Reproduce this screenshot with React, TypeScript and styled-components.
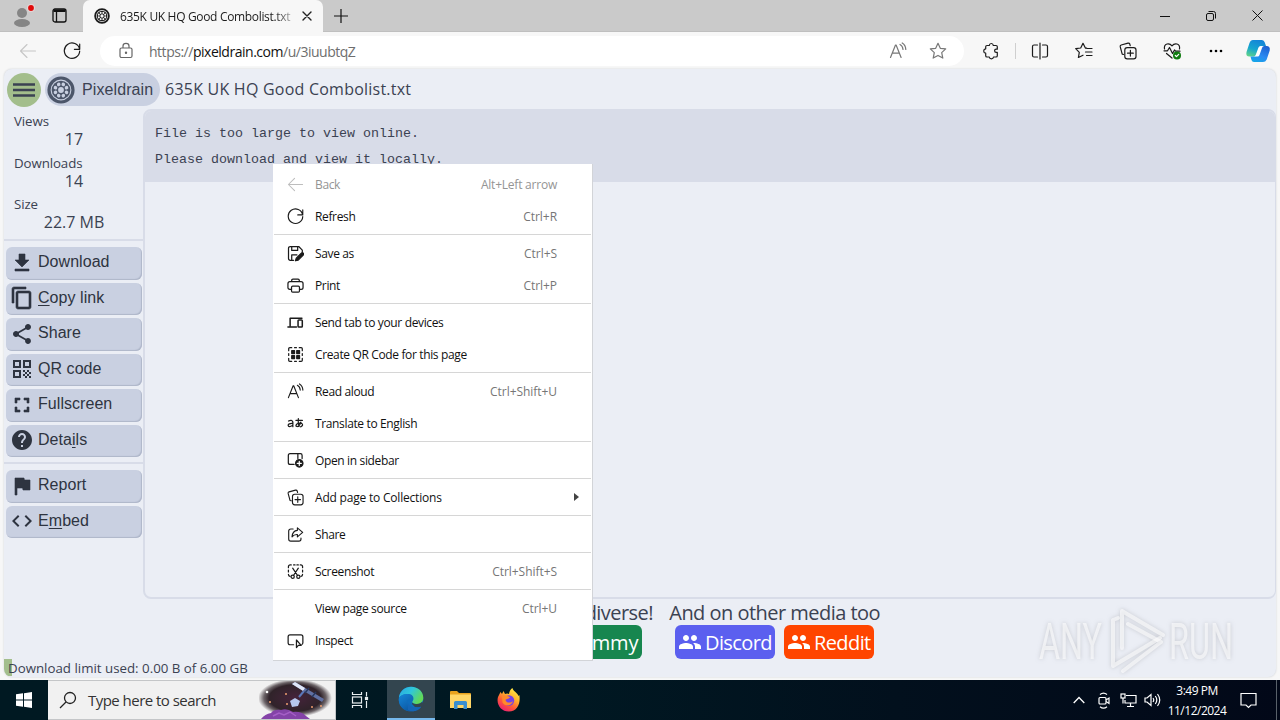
import React from 'react';
import styled, { createGlobalStyle } from 'styled-components';
import {
  MdFileDownload, MdContentCopy, MdShare, MdQrCode, MdFullscreen, MdHelp, MdFlag, MdCode, MdPeople,
} from 'react-icons/md';

const Global = createGlobalStyle`
  html, body { margin: 0; padding: 0; }
  body { width: 1280px; height: 720px; overflow: hidden; font-family: 'Open Sans', 'Noto Sans', sans-serif; }
  * { box-sizing: border-box; }
  svg { display: block; flex: none; }
`;

const Screen = styled.div`
  position: relative;
  width: 1280px;
  height: 720px;
  overflow: hidden;
  display: flex;
  flex-direction: column;
  background: #f7f7f7;
`;

const Label = styled.span<{ $size: number; $ls?: number; $color?: string; $arial?: boolean }>`
  font-size: ${p => p.$size}px;
  letter-spacing: ${p => p.$ls ?? 0}px;
  color: ${p => p.$color ?? 'inherit'};
  ${p => p.$arial && "font-family: 'Liberation Sans', Arial, sans-serif;"}
  white-space: pre;
`;

/* ---------- browser chrome ---------- */
const TabStrip = styled.header`
  height: 32px;
  flex: none;
  display: flex;
  background: #cacaca;
  border-bottom: 1px solid #bfbfbf;
`;
const StripButtons = styled.div`
  width: 83px;
  display: flex;
  align-items: center;
  padding: 0 0 0 10px;
  gap: 16px;
`;
const Tab = styled.div`
  width: 240px;
  height: 32px;
  display: flex;
  align-items: center;
  padding-left: 11px;
  background: #f7f7f7;
  border-radius: 7px 7px 0 0;
`;
const TabTitle = styled.div`
  width: 178px;
  margin-left: 10px;
  display: flex;
  overflow: hidden;
  mask-image: linear-gradient(90deg, #000 154px, transparent 180px);
`;
const WindowControls = styled.div`
  margin-left: auto;
  display: flex;
  align-items: center;
`;
const ControlCell = styled.div`
  width: 46px;
  display: flex;
  justify-content: center;
`;
const Toolbar = styled.div`
  height: 37px;
  flex: none;
  display: flex;
  align-items: center;
  padding-left: 18px;
`;
const AddressBar = styled.div`
  width: 864px;
  height: 30px;
  flex: none;
  margin-left: -6px;
  display: flex;
  align-items: center;
  padding: 0 10px 0 18px;
  border-radius: 15px;
  background: #fff;
`;
const Url = styled.div`
  flex: 1;
  margin-left: 15px;
  color: #6e6e6e;
  b { font-weight: 400; color: #111; }
`;
const ToolbarIcons = styled.div`
  flex: 1;
  display: flex;
  align-items: center;
  padding-left: 17px;
`;
const IconCell = styled.div<{ $w: number }>`
  width: ${p => p.$w}px;
  flex: none;
  display: flex;
  justify-content: center;
`;
const ToolDivider = styled.div`
  width: 1px;
  height: 16px;
  background: #cfcfcf;
`;

/* ---------- page ---------- */
const Page = styled.main`
  height: 608px;
  flex: none;
  margin: 0 4px 3px 4px;
  display: flex;
  flex-direction: column;
  border-radius: 8px;
  background: #ebeef5;
  color: #3b4252;
  box-shadow: 0 0 2px #c9ccd0;
  overflow: hidden;
`;
const PageHeader = styled.div`
  height: 40px;
  flex: none;
  display: flex;
  align-items: center;
  padding: 1px 0 0 3px;
`;
const MenuToggle = styled.div`
  width: 34px;
  height: 34px;
  border-radius: 50%;
  display: grid;
  place-items: center;
  background: #a3be8c;
`;
const BrandPill = styled.div`
  width: 115px;
  height: 33px;
  margin: 0 5px 0 4px;
  border-radius: 17px;
  display: flex;
  align-items: center;
  gap: 7px;
  padding-left: 2px;
  background: #c9d0e1;
`;
const FileName = styled.div`
  padding-bottom: 2px;
`;
const Body = styled.div`
  height: 490px;
  flex: none;
  display: flex;
`;
const Sidebar = styled.aside`
  width: 139px;
  display: flex;
  flex-direction: column;
`;
const Stats = styled.dl`
  margin: 0;
  height: 130px;
  padding-top: 1px;
`;
const StatName = styled.dt`
  height: 20px;
  line-height: 20px;
  padding-left: 10px;
`;
const StatValue = styled.dd`
  height: 21.7px;
  line-height: 19px;
  margin: 0;
  text-align: center;
  padding-left: 1px;
`;
const Rule = styled.div`
  height: 2px;
  flex: none;
  background: #d8dce8;
`;
const ButtonGroup = styled.div<{ $top: number; $bottom: number }>`
  display: flex;
  flex-direction: column;
  gap: 3px;
  padding: ${p => p.$top}px 1px ${p => p.$bottom}px 2px;
`;
const SideButton = styled.div`
  height: 32.5px;
  display: flex;
  align-items: center;
  gap: 4px;
  padding-left: 4px;
  border-radius: 6px;
  background: #c9d0e1;
  color: #2e3440;
  box-shadow: inset -1px -1px 1px #aeb6c9;
  u { text-decoration-thickness: 1px; text-underline-offset: 2px; }
  span { padding-bottom: 2px; }
  svg { margin-bottom: 1px; }
  path[fill='none'] { stroke: none; }
`;
const Viewer = styled.section`
  flex: 1;
  border: 2px solid #d8dce8;
  border-right-width: 1px;
  border-radius: 8px;
  overflow: hidden;
`;
const Notice = styled.pre`
  margin: 0;
  height: 71px;
  padding: 10px 10px 0;
  background: #d8dce8;
  font: 13.33px/26px 'Liberation Mono', monospace;
  color: #3b4252;
`;
const Footer = styled.footer`
  flex: 1;
  display: flex;
  gap: 16px;
  padding-left: 548px;
`;
const SocialBlock = styled.div<{ $w: number }>`
  width: ${p => p.$w}px;
  display: flex;
  flex-direction: column;
  align-items: center;
`;
const SocialTitle = styled.div`
  width: 100%;
  height: 26px;
  line-height: 27px;
  text-align: right;
`;
const SocialRow = styled.div`
  display: flex;
  gap: 9px;
`;
const SocialButton = styled.div<{ $bg: string; $w: number; $pad?: number }>`
  width: ${p => p.$w}px;
  height: 34px;
  display: flex;
  align-items: center;
  gap: 3px;
  padding-left: ${p => p.$pad ?? 3}px;
  border-radius: 6px;
  background: ${p => p.$bg};
  color: #fff;
`;
const Limit = styled.div`
  height: 21px;
  flex: none;
  line-height: 17px;
  padding-left: 4px;
  background: linear-gradient(90deg, #a3be8c 8px, transparent 8px);
  background-size: 100% 17px;
  background-repeat: no-repeat;
  border-radius: 0 0 0 8px;
`;

/* ---------- context menu ---------- */
const Menu = styled.div`
  position: absolute;
  left: 273px;
  top: 164px;
  width: 320px;
  height: 497px;
  padding: 4px 0;
  background: #fff;
  border: 1px solid #d2d4d8;
  border-width: 0 1px 1px 0;
`;
const MenuRow = styled.div`
  height: 32px;
  display: flex;
  align-items: center;
  padding: 0 12px 0 13.5px;
`;
const MenuIcon = styled.div`
  width: 28.5px;
  svg { width: 17px; height: 17px; }
`;
const MenuText = styled.div`
  flex: 1;
  padding-bottom: 2px;
`;
const Arrow = styled.div`
  width: 23px;
  display: flex;
  justify-content: flex-end;
`;
const MenuRule = styled.div`
  height: 5px;
  padding: 2px 1px;
  &::after { content: ''; display: block; height: 1px; background: #d6d6d6; }
`;

/* ---------- taskbar ---------- */
const Taskbar = styled.footer`
  height: 40px;
  flex: none;
  display: flex;
  background: linear-gradient(90deg, #001922 0%, #001822 45%, #02101d 70%, #020818 100%);
`;
const TaskCell = styled.div<{ $w: number; $active?: boolean }>`
  width: ${p => p.$w}px;
  display: grid;
  place-items: center;
  ${p => p.$active && 'background: #33454f; border-bottom: 2px solid #76b9ed;'}
`;
const SearchBox = styled.div`
  width: 288px;
  display: flex;
  align-items: center;
  padding-left: 11px;
  background: #f1f1f1;
  border: 1px solid #c4c6c8;
  border-width: 1px 1px 1px 0;
  overflow: hidden;
`;
const SearchText = styled.div`
  width: 171px;
  margin-left: 11px;
`;
const Tray = styled.div`
  margin-left: auto;
  display: flex;
  align-items: center;
`;
const Clock = styled.div`
  width: 66px;
  line-height: 18px;
  text-align: center;
  color: #fff;
`;
const DesktopEdge = styled.div`
  width: 4px;
  height: 40px;
  margin-left: 9px;
  border-left: 1px solid #59616a;
`;
const Watermark = styled.svg`
  position: absolute;
  left: 1030px;
  top: 600px;
  filter: drop-shadow(0 0 2px rgba(120, 122, 130, 0.5));
`;

/* ---------- icons ---------- */
type IconProps = { w?: number; c?: string; sw?: number; children: React.ReactNode };
const Line = ({ w = 18, c = '#1b1b1b', sw = 1.2, children }: IconProps) => (
  <svg width={w} height={w} viewBox="0 0 18 18" fill="none" stroke={c} strokeWidth={sw} strokeLinecap="round" strokeLinejoin="round">
    {children}
  </svg>
);
const BackArrow = ({ c, w }: { c: string; w?: number }) => <Line c={c} w={w} sw={1.1}><path d="M16.5 9H1.8M8 2.5L1.5 9 8 15.5" /></Line>;
const Refresh = () => <Line><path d="M16.6 7.4A7.7 7.7 0 1 0 16.7 9M16.7 2v5.3h-5.3" /></Line>;
const ReadAloud = ({ c }: { c?: string }) => (
  <Line c={c}><path d="M1.5 15.5L6.5 3h.6l5 12.5M3.2 11.2h7.2M11 2.5q2.8 1.4 3 5M13.2 1q3.4 2 3.6 6.5" /></Line>
);
const Collections = () => (
  <Line>
    <path d="M4.5 12.5l-1.3-.4-2-7.4Q1 3.4 2.2 3L9 1.2q1.3-.3 1.8.9l.4 1.6" />
    <rect x="5.8" y="5.6" width="11.2" height="11.2" rx="2.4" /><path d="M11.4 8.3v5.8M8.5 11.2h5.8" />
  </Line>
);
const Wheel = ({ w, c, light }: { w: number; c: string; light: string }) => (
  <svg width={w} height={w} viewBox="0 0 28 28" fill="none">
    <circle cx="14" cy="14" r="12" stroke={c} strokeWidth="3.2" />
    <circle cx="14" cy="14" r="9.3" fill={c} />
    {[0, 45, 90, 135, 180, 225, 270, 315].map(a => (
      <circle key={a} cx="14" cy="8" r="1.8" fill={light} transform={`rotate(${a + 22.5} 14 14)`} />
    ))}
    <circle cx="14" cy="14" r="2.9" fill={light} />
  </svg>
);
const SaveAs = () => (
  <Line sw={1.3}>
    <path d="M7 16.2H3.4a1.8 1.8 0 0 1-1.8-1.8V3.4a1.8 1.8 0 0 1 1.8-1.8h9l3.8 3.8v2M5 1.8v4h6.3v-4M5 16v-5.5h5.5" />
    <path d="M9 16.7l.8-2.8 5.4-5.3a1.4 1.4 0 0 1 2 2L11.9 16z" fill="#1b1b1b" />
  </Line>
);
const Print = () => (
  <Line sw={1.3}>
    <path d="M5 4.8V3.5Q5 2.2 6.3 2.2h5.4Q13 2.2 13 3.5v1.3M4.6 13H3Q1 13 1 11V7.2Q1 5 3.2 5h11.6Q17 5 17 7.2V11q0 2-2 2h-1.6" />
    <rect x="4.8" y="9.6" width="8.4" height="6.4" rx="1.2" />
  </Line>
);
const Devices = () => (
  <Line sw={1.6}><path d="M3.3 12.5V4.4h12.5M1 13.8h9" /><rect x="11.7" y="6.4" width="4.5" height="7.4" rx=".8" /></Line>
);
const QrPage = () => (
  <Line sw={1.3}>
    <path d="M1.8 5V3Q1.8 1.8 3 1.8h2M13 1.8h2Q16.2 1.8 16.2 3v2M16.2 13v2q0 1.2-1.2 1.2h-2M5 16.2H3q-1.2 0-1.2-1.2v-2M8 1.8h2M8 16.2h2M1.8 8v2M16.2 8v2" />
    <path d="M5 5h3v3H5zM10.3 5h3v3h-3zM5 10.3h3v3H5zM10.3 10.3h3v3h-3z" fill="#1b1b1b" />
  </Line>
);
const Translate = () => (
  <Line sw={1.3}>
    <path d="M1.6 6.4q3.6-1.8 4.6 1v5M6.2 9q-5-.3-5 2 .4 2.6 5-.2M9.500 5.800h6.800M12 3.800q-.6 5 .8 8.400M14.600 7.500q-1 4.400-4 4.700-2.200-.6-.2-2.600 2.500-1.800 5.200-.7 2.300 2.200-1.200 3.600" />
  </Line>
);
const OpenSidebar = () => (
  <Line sw={1.3}>
    <path d="M7.5 13.2H3.2q-1.8 0-1.8-1.8V3.6q0-1.8 1.8-1.8h11q1.800 0 1.800 1.800V7M11.500 2v5" />
    <circle cx="13" cy="12" r="3.9" fill="#1b1b1b" /><path d="M13 9.8v4.4M10.8 12h4.4" stroke="#fff" />
  </Line>
);
const SharePage = () => (
  <Line>
    <path d="M6.5 3.2H4q-2.2 0-2.2 2.2v8.4Q1.8 16 4 16h8.6q2.2 0 2.2-2.2v-1" />
    <path d="M11 2l5.600 4.800L11 11.500V9Q7.500 8.700 5.300 11.500 5.800 5 11 4.600z" />
  </Line>
);
const Screenshot = () => (
  <Line sw={1.3}>
    <path d="M1.5 5V4q0-2 2-2h1M7 2h1.500M10.500 2H12M14 2h.5q2 0 2 2v1M16.500 7.500v2M1.500 7.500v2M1.500 12q0 2 1.700 2.200M16.500 12q0 2-1.700 2.200" />
    <path d="M6 5.500l5 7.500M12 5.500L7 13" /><circle cx="6" cy="14.500" r="1.700" /><circle cx="12" cy="14.500" r="1.700" />
  </Line>
);
const Inspect = () => (
  <Line sw={1.3}>
    <path d="M7 13.500H3.200q-2 0-2-2V5q0-2 2-2h11.600q2 0 2 2v6.500q0 1.300-1 1.700" />
    <path d="M10 8.500v8l2-2.300h3z" />
  </Line>
);

const sideIcon = { size: 24 };
const boldIcon = { size: 24, strokeWidth: 0.6 };
const mainButtons: [React.ReactNode, React.ReactNode][] = [
  [<MdFileDownload {...boldIcon} />, 'Download'],
  [<MdContentCopy {...boldIcon} />, <><u>C</u>opy link</>],
  [<MdShare {...sideIcon} />, 'Share'],
  [<MdQrCode {...sideIcon} />, 'QR code'],
  [<MdFullscreen {...boldIcon} />, 'Fullscreen'],
  [<MdHelp {...sideIcon} />, <>Deta<u>i</u>ls</>],
];
const extraButtons: [React.ReactNode, React.ReactNode][] = [
  [<MdFlag {...boldIcon} />, 'Report'],
  [<MdCode {...sideIcon} />, <>E<u>m</u>bed</>],
];

type Item = { icon?: React.ReactNode; text: string; keys?: string; off?: boolean; sub?: boolean };
const menu: Item[][] = [
  [{ icon: <BackArrow c="#bdbdbd" />, text: 'Back', keys: 'Alt+Left arrow', off: true }, { icon: <Refresh />, text: 'Refresh', keys: 'Ctrl+R' }],
  [{ icon: <SaveAs />, text: 'Save as', keys: 'Ctrl+S' }, { icon: <Print />, text: 'Print', keys: 'Ctrl+P' }],
  [{ icon: <Devices />, text: 'Send tab to your devices' }, { icon: <QrPage />, text: 'Create QR Code for this page' }],
  [{ icon: <ReadAloud />, text: 'Read aloud', keys: 'Ctrl+Shift+U' }, { icon: <Translate />, text: 'Translate to English' }],
  [{ icon: <OpenSidebar />, text: 'Open in sidebar' }],
  [{ icon: <Collections />, text: 'Add page to Collections', sub: true }],
  [{ icon: <SharePage />, text: 'Share' }],
  [{ icon: <Screenshot />, text: 'Screenshot', keys: 'Ctrl+Shift+S' }],
  [{ text: 'View page source', keys: 'Ctrl+U' }, { icon: <Inspect />, text: 'Inspect' }],
];

const EdgeLogo = () => (
  <svg width="26" height="26" viewBox="0 0 26 26">
    <defs>
      <linearGradient id="eg" x1="0" y1="0" x2="1" y2=".5"><stop offset="0" stopColor="#2aa7e0" /><stop offset=".5" stopColor="#2fc6dc" /><stop offset="1" stopColor="#62d957" /></linearGradient>
      <linearGradient id="eb" x1="0" y1="0" x2=".6" y2="1"><stop offset="0" stopColor="#1687d9" /><stop offset="1" stopColor="#0c59a4" /></linearGradient>
    </defs>
    <circle cx="13" cy="13" r="12.3" fill="#0f6dbd" />
    <path d="M1 12C1.500 5 7 .7 13 .7c7.500 0 12.300 5 12.300 11 0 4-3 6.300-6.500 6.300-3 0-5-1-4.500-2.200 2.500-3 1-7.800-4-7.800C5.500 8 2 10 1 12z" fill="url(#eg)" />
    <path d="M.8 13.500C1.500 9.500 6 7.500 10 8c4 .5 5.500 3.500 5 6-1-2-4-2-5.300.5-1.700 4 1.300 9 6.300 10.300C8 27 .5 21 .8 13.500z" fill="url(#eb)" />
    <path d="M14.300 15.800c-.5 1.200 1.500 2.200 4.500 2.200 2.200 0 4-.7 5.200-2l2.500 2.500-3 3-6.500-.5-3-3z" fill="#33454f" />
    <path d="M9.700 14.500c-.7 4.500 4.800 8.500 11.800 6.500.8-.3 1.500-.4 1.500.2-3 4.300-9 5-13 2.800z" fill="#1565b5" />
  </svg>
);
const FolderLogo = () => (
  <svg width="23" height="20" viewBox="0 0 23 20">
    <path d="M1 2Q1 1 2 1h6l2 2h11q1 0 1 1v4H1z" fill="#e8a21e" />
    <path d="M1 4.500h21V18H1z" fill="#ffd667" />
    <path d="M5 19v-6.500Q5 11 6.500 11h10q1.500 0 1.500 1.500V19h-3.500v-4h-6v4z" fill="#3a8fd0" />
  </svg>
);
const FirefoxLogo = () => (
  <svg width="24" height="24" viewBox="0 0 24 24">
    <defs><linearGradient id="ff" x1=".8" y1="0" x2=".2" y2="1"><stop offset="0" stopColor="#fff04a" /><stop offset=".35" stopColor="#ffb42c" /><stop offset=".65" stopColor="#ff5a36" /><stop offset="1" stopColor="#e8187a" /></linearGradient></defs>
    <path d="M3.500 4l1.500 2L6.500 3l1.500 3c1.500-.8 3-.8 4 0 .3-2.500 1.500-4.800 3.500-6 .2 3 5 4.500 6 8l.8-1c1.500 7-1.300 16.500-10.500 16.500C4 23.500-1 16 1 9z" fill="url(#ff)" />
    <circle cx="12" cy="12.500" r="5.200" fill="#7542e5" />
    <path d="M5 8c3-1.500 6 .2 8 1-.5 2-3.500 1.500-4.500 3 .7 3 5 3.500 7.500 1-1 5-8 6-10.500 1.500z" fill="#ff8a2a" />
  </svg>
);
const Copilot = () => (
  <svg width="26" height="26" viewBox="0 0 26 26">
    <defs>
      <linearGradient id="c1" x1=".6" y1="0" x2=".2" y2="1"><stop offset="0" stopColor="#1484d8" /><stop offset=".55" stopColor="#16a6cf" /><stop offset="1" stopColor="#5fd38a" /></linearGradient>
      <linearGradient id="c2" x1=".8" y1="0" x2=".3" y2="1"><stop offset="0" stopColor="#1d5fd0" /><stop offset=".6" stopColor="#2b8bf2" /><stop offset="1" stopColor="#16a5e8" /></linearGradient>
    </defs>
    <path d="M8 2h9q2 0 2.800 2.500L21 8h-4.500q-2 0-2.700 2l-2.500 7q-.8 1.500-2.500 1.500H4.500Q.5 18.500 1.500 14L4.500 5Q5.500 2 8 2z" fill="url(#c1)" />
    <path d="M18 24H9q-2 0-2.500-2l-1-3.500h4q2 0 2.600-2l2.500-7Q15.500 8 17.500 8h4q4 0 3.200 4.500l-3 9Q20.500 24 18 24z" fill="url(#c2)" />
    <path d="M13.500 9.500l-2.800 7.500q-.6 1.500-2.200 1.500h4q1.500 0 2-1.500l2.500-7q.5-1.800 2.200-2h-3.300q-1.800 0-2.400 1.500z" fill="#fff" />
  </svg>
);
const SearchArt = () => (
  <svg width="76" height="38" viewBox="0 0 76 38">
    <defs><radialGradient id="sky"><stop offset="0" stopColor="#45233b" /><stop offset=".7" stopColor="#30232a" /><stop offset=".84" stopColor="#6a6266" /><stop offset="1" stopColor="#f1f1f1" /></radialGradient></defs>
    <ellipse cx="36" cy="17" rx="37" ry="19" fill="url(#sky)" />
    <path d="M2 38q4-5 10-6 3-4 10-3 6-2 12 2 8-1 13 4l4 3z" fill="#8443a8" />
    <path d="M14 35l6-3 5 2 6-3 6 4" stroke="#a55fc6" strokeWidth="1.500" fill="none" />
    <path d="M33 3l3-2 29 17-2 3z" fill="#6070a2" /><path d="M33 3l3-2 10 6-2 3z" fill="#dfe6f8" /><path d="M46 12l4-5M53 16l4-5" stroke="#28385f" strokeWidth="1.500" />
    <path d="M31 20l5-3 5 3-2 5-6 1z" fill="#b7c8ee" /><path d="M40 16l5-6" stroke="#5a76b8" strokeWidth="2" />
    <g fill="#f0a070"><circle cx="11" cy="21" r="1" /><circle cx="8" cy="11" r="1.300" fill="#fff" /><circle cx="27" cy="13" r="1" /><circle cx="28" cy="23" r="1" /><circle cx="53" cy="26" r="1" /><circle cx="62" cy="25" r="1" /></g>
  </svg>
);

export default function App() {
  return (
    <Screen>
      <Global />
      <TabStrip>
        <StripButtons>
          <svg width="26" height="26" viewBox="0 0 26 26">
            <circle cx="12" cy="10" r="5" fill="#858585" /><ellipse cx="12" cy="20" rx="8" ry="4" fill="#858585" />
            <circle cx="21" cy="5" r="4" fill="#e5d6d6" /><circle cx="21" cy="5" r="2.900" fill="#e00b0b" />
          </svg>
          <svg width="15" height="15" viewBox="0 0 15 15" fill="none" stroke="#111" strokeWidth="1.300">
            <rect x="1" y="1" width="13" height="13" rx="2" /><path d="M1.500 2.700h12" strokeWidth="2.600" /><path d="M4.500 4v10" />
          </svg>
        </StripButtons>
        <Tab>
          <Wheel w={16} c="#1b1b1b" light="#f7f7f7" />
          <TabTitle><Label $size={12} $ls={-0.33} $color="#1b1b1b">635K UK HQ Good Combolist.txt</Label></TabTitle>
          <Line w={18} c="#222" sw={1.4}><path d="M5 5l8 8M13 5l-8 8" /></Line>
        </Tab>
        <IconCell $w={35}><svg width="14" height="32" viewBox="0 0 14 32" stroke="#111" strokeWidth="1.200"><path d="M7 9v14M0 16h14" /></svg></IconCell>
        <WindowControls>
          <ControlCell><svg width="10" height="10" stroke="#111"><path d="M0 5.500h10" /></svg></ControlCell>
          <ControlCell><svg width="12" height="12" fill="none" stroke="#111"><rect x="1.500" y="3.500" width="7" height="7" rx="1.500" /><path d="M3.500 1.500h5q2 0 2 2v5" /></svg></ControlCell>
          <ControlCell><svg width="11" height="11" stroke="#111"><path d="M.5 .5l10 10M10.500 .5l-10 10" /></svg></ControlCell>
        </WindowControls>
      </TabStrip>
      <Toolbar>
        <IconCell $w={20}><BackArrow c="#c6c6c6" w={18} /></IconCell>
        <IconCell $w={68}><Refresh /></IconCell>
        <AddressBar>
          <svg width="16" height="17" viewBox="0 0 16 17" fill="none" stroke="#666" strokeWidth="1.200"><rect x="2" y="6" width="12" height="9.500" rx="1.500" /><path d="M5 6V4q0-2.700 3-2.700T11 4v2" /><circle cx="8" cy="10.800" r=".6" fill="#666" /></svg>
          <Url><Label $size={14} $ls={-0.48}>https://<b>pixeldrain.com</b>/u/3iuubtqZ</Label></Url>
          <IconCell $w={48}><ReadAloud c="#777" /></IconCell>
          <IconCell $w={32}><Line c="#777"><path d="M9 1.300l2.300 5 5.400.6-4 3.700 1.100 5.500L9 13.400l-4.800 2.700 1.100-5.500-4-3.700 5.400-.6z" /></Line></IconCell>
        </AddressBar>
        <ToolbarIcons>
          <IconCell $w={20}><Line><path d="M5 3.500h2.300q.2-2 2-2t2 2H14q1.300 0 1.300 1.300v2.400h-1.100q-1.600 0-1.600 1.600t1.600 1.600h1.100v3.300q0 1.300-1.300 1.300h-2.500q-.2 1.800-2.100 1.800t-2.100-1.800H5q-1.300 0-1.300-1.300v-2.500q-2-.2-2-2.200t2-2.200V4.800q0-1.300 1.300-1.300z" /></Line></IconCell>
          <IconCell $w={28}><ToolDivider /></IconCell>
          <IconCell $w={22}><Line><path d="M6.500 3H3Q1.500 3 1.500 4.500v9Q1.500 15 3 15h3.500M11.500 3H15q1.500 0 1.500 1.500v9q0 1.500-1.500 1.500h-3.500M9 1v16" /></Line></IconCell>
          <IconCell $w={66}><Line><path d="M11.700 6.200h-1.200L8 1.300 5.700 6l-5 .7 3.600 3.600-.9 5.200L8 13.200M12 6.500h5M10.500 10h6.500M11.500 13.500h5.500" /></Line></IconCell>
          <IconCell $w={22}><Collections /></IconCell>
          <IconCell $w={66}>
            <Line><path d="M1.500 7Q.8 3 4 2q3-.7 5 1.800Q11 1.300 14 2q3.200 1 2.500 5M1 8.800h3.500L6.500 5.500l3 6 2-3.500 1 1.200H17M3.500 11.500L9 16" /><circle cx="14" cy="13.500" r="4" fill="#107c10" stroke="none" /><path d="M12.300 13.500l1.200 1.200 2.200-2.300" stroke="#fff" /></Line>
          </IconCell>
          <IconCell $w={22}><svg width="14" height="4"><circle cx="2" cy="2" r="1.300" /><circle cx="7" cy="2" r="1.300" /><circle cx="12" cy="2" r="1.300" /></svg></IconCell>
          <IconCell $w={62}><Copilot /></IconCell>
        </ToolbarIcons>
      </Toolbar>

      <Page>
        <PageHeader>
          <MenuToggle><svg width="22" height="14" stroke="#3b4252" strokeWidth="2.500"><path d="M0 1.500h22M0 7h22M0 12.500h22" /></svg></MenuToggle>
          <BrandPill><Wheel w={28} c="#4c566a" light="#c9d0e1" /><Label $size={16} $arial $ls={0.1}>Pixeldrain</Label></BrandPill>
          <FileName><Label $size={16} $ls={0.23}>635K UK HQ Good Combolist.txt</Label></FileName>
        </PageHeader>
        <Body>
          <Sidebar>
            <Stats>
              {[['Views', '17'], ['Downloads', '14'], ['Size', '22.7 MB']].map(([n, v]) => (
                <React.Fragment key={n}>
                  <StatName><Label $size={13.3} $ls={-0.1}>{n}</Label></StatName>
                  <StatValue><Label $size={16}>{v}</Label></StatValue>
                </React.Fragment>
              ))}
            </Stats>
            <Rule />
            <ButtonGroup $top={6} $bottom={5}>
              {mainButtons.map(([icon, t], i) => <SideButton key={i}>{icon}<Label $size={16} $arial $ls={0.05}>{t}</Label></SideButton>)}
            </ButtonGroup>
            <Rule />
            <ButtonGroup $top={6} $bottom={0}>
              {extraButtons.map(([icon, t], i) => <SideButton key={i}>{icon}<Label $size={16} $arial $ls={0.05}>{t}</Label></SideButton>)}
            </ButtonGroup>
          </Sidebar>
          <Viewer><Notice>{'File is too large to view online.\nPlease download and view it locally.'}</Notice></Viewer>
        </Body>
        <Footer>
          <SocialBlock $w={101}>
            <SocialTitle><Label $size={20} $ls={-0.55}>Fediverse!</Label></SocialTitle>
            <SocialRow><SocialButton $bg="#17864f" $w={78} $pad={7}><Label $size={20} $ls={-0.2}>Lemmy</Label></SocialButton></SocialRow>
          </SocialBlock>
          <SocialBlock $w={211}>
            <SocialTitle><Label $size={20} $ls={-0.53}>And on other media too</Label></SocialTitle>
            <SocialRow>
              <SocialButton $bg="#5b5fef" $w={100}><MdPeople size={24} /><Label $size={20} $ls={-0.6}>Discord</Label></SocialButton>
              <SocialButton $bg="#ff4500" $w={90}><MdPeople size={24} /><Label $size={20} $ls={-0.6}>Reddit</Label></SocialButton>
            </SocialRow>
          </SocialBlock>
        </Footer>
        <Limit><Label $size={13.3}>Download limit used: 0.00 B of 6.00 GB</Label></Limit>
      </Page>

      <Taskbar>
        <TaskCell $w={48}><svg width="16" height="16" fill="#fff"><path d="M0 2.300L7 1.300v6.200H0zM8 1.200L16 0v7.500H8zM0 8.500h7v6.200l-7-1zM8 8.500h8V16l-8-1.200z" /></svg></TaskCell>
        <SearchBox>
          <svg width="18" height="18" fill="none" stroke="#222" strokeWidth="1.300"><circle cx="11" cy="7" r="5.500" /><path d="M7 11l-6 6" /></svg>
          <SearchText><Label $size={15} $ls={-0.53} $color="#333">Type here to search</Label></SearchText>
          <SearchArt />
        </SearchBox>
        <TaskCell $w={48}><svg width="18" height="18" fill="none" stroke="#e8eef0" strokeWidth="1.200"><path d="M1.500 1v2.500h9V1M1.500 17v-2.500h9V17" /><rect x="1.500" y="6" width="9" height="6" /><path d="M15.500 1v4.500M15.500 10v7" /><rect x="14.500" y="6.500" width="2" height="2" fill="#fff" /></svg></TaskCell>
        <IconCell $w={3} />
        <TaskCell $w={48} $active><EdgeLogo /></TaskCell>
        <TaskCell $w={50}><FolderLogo /></TaskCell>
        <TaskCell $w={48}><FirefoxLogo /></TaskCell>
        <Tray>
          <IconCell $w={24}><svg width="12" height="8" fill="none" stroke="#fff" strokeWidth="1.300"><path d="M.7 7L6 1.500 11.300 7" /></svg></IconCell>
          <IconCell $w={26}><svg width="14" height="17" fill="none" stroke="#fff" strokeWidth="1.200"><rect x="2" y="5.500" width="7" height="6.500" rx="1" /><path d="M9 8l3-2v5.500L9 9.500M3 2.500Q6.500-.3 10 2.500M3 14.800q3.500 2.800 7 0" /></svg></IconCell>
          <IconCell $w={23}><svg width="17" height="15" fill="none" stroke="#fff" strokeWidth="1.200"><path d="M6 2.500h10v7.500H5V7M10.500 10v3.500M7 13.500h7" /><rect x="1" y="1" width="4" height="4" /><path d="M3 5v5.500" /></svg></IconCell>
          <IconCell $w={24}><svg width="17" height="14" fill="none" stroke="#fff" strokeWidth="1.200"><path d="M1 5h2l4-3.500v11L3 9H1zM9 5q1.500 2 0 4M11.300 3q3 4 0 8M13.500 1q4.500 6 0 12" /></svg></IconCell>
          <Clock><Label $size={12} $ls={-0.5}>{'3:49 PM\n11/12/2024'}</Label></Clock>
          <IconCell $w={37}><svg width="17" height="17" fill="none" stroke="#fff" strokeWidth="1.200"><path d="M1 1.500h15v11.500h-5L8.500 15.500 6 13H1z" /></svg></IconCell>
          <DesktopEdge />
        </Tray>
      </Taskbar>

      <Menu>
        {menu.map((group, g) => (
          <React.Fragment key={g}>
            {g > 0 && <MenuRule />}
            {group.map(it => (
              <MenuRow key={it.text}>
                <MenuIcon>{it.icon}</MenuIcon>
                <MenuText><Label $size={12} $ls={it.sub ? -0.2 : -0.36} $color={it.off ? '#949494' : '#111'}>{it.text}</Label></MenuText>
                {it.keys && <Label $size={12} $ls={it.off ? -0.22 : -0.05} $color={it.off ? '#949494' : '#767676'}>{it.keys}</Label>}
                <Arrow>{it.sub && <svg width="6" height="10"><path d="M0 1l5 4-5 4z" fill="#444" /></svg>}</Arrow>
              </MenuRow>
            ))}
          </React.Fragment>
        ))}
      </Menu>
      <Watermark width="210" height="80" viewBox="0 0 210 80" fill="none">
        <g fill="#fff" fillOpacity=".6" fontFamily="Roboto, sans-serif" fontSize="50">
          <text x="9" y="59" textLength="63" lengthAdjust="spacingAndGlyphs">ANY</text>
          <text x="139" y="59" textLength="64" lengthAdjust="spacingAndGlyphs">RUN</text>
        </g>
        <g stroke="#fff" strokeOpacity=".6" strokeWidth="4" strokeLinejoin="round" strokeLinecap="round">
          <path d="M92 48V11L133 35" />
          <path d="M88 18L83 20V66L130 38" />
          <path d="M98 24L131 42L93 71" />
        </g>
      </Watermark>
    </Screen>
  );
}
